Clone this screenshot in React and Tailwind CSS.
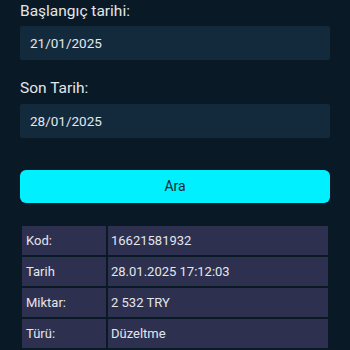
import React from "react";

const rows = [
  ["Kod:", "16621581932"],
  ["Tarih", "28.01.2025 17:12:03"],
  ["Miktar:", "2 532 TRY"],
  ["Türü:", "Düzeltme"],
];

export default function App() {
  return (
    <div
      className="w-[350px] h-[350px] overflow-hidden bg-[#0a1926] px-5 pt-[1px] text-[#e3e6ea]"
      style={{ fontFamily: "Roboto, 'Noto Sans', sans-serif" }}
    >
      <div className="text-[15.5px] leading-[20px]">Başlangıç tarihi:</div>
      <div className="mt-[5px] h-[34px] bg-[#132a3c] rounded-[2px] pl-[10px] flex items-center text-[13.5px]">
        21/01/2025
      </div>
      <div className="mt-[18px] text-[15.5px] leading-[20px]">Son Tarih:</div>
      <div className="mt-[6px] h-[34px] bg-[#132a3c] rounded-[2px] pl-[10px] flex items-center text-[13.5px]">
        28/01/2025
      </div>
      <button className="mt-[32px] w-full h-[33px] rounded-[6px] bg-[#00f0ff] text-[#1c2733] text-[14px] flex items-center justify-center">
        Ara
      </button>
      <table className="mt-[21px] w-full border-separate border-spacing-[2px] text-[13px]">
        <tbody>
          {rows.map(([k, v]) => (
            <tr key={k}>
              <td className="w-[84px] h-[29px] bg-[#2e3050] pl-[4px] align-middle">{k}</td>
              <td className="h-[29px] bg-[#2e3050] pl-[3px] align-middle">{v}</td>
            </tr>
          ))}
        </tbody>
      </table>
    </div>
  );
}
